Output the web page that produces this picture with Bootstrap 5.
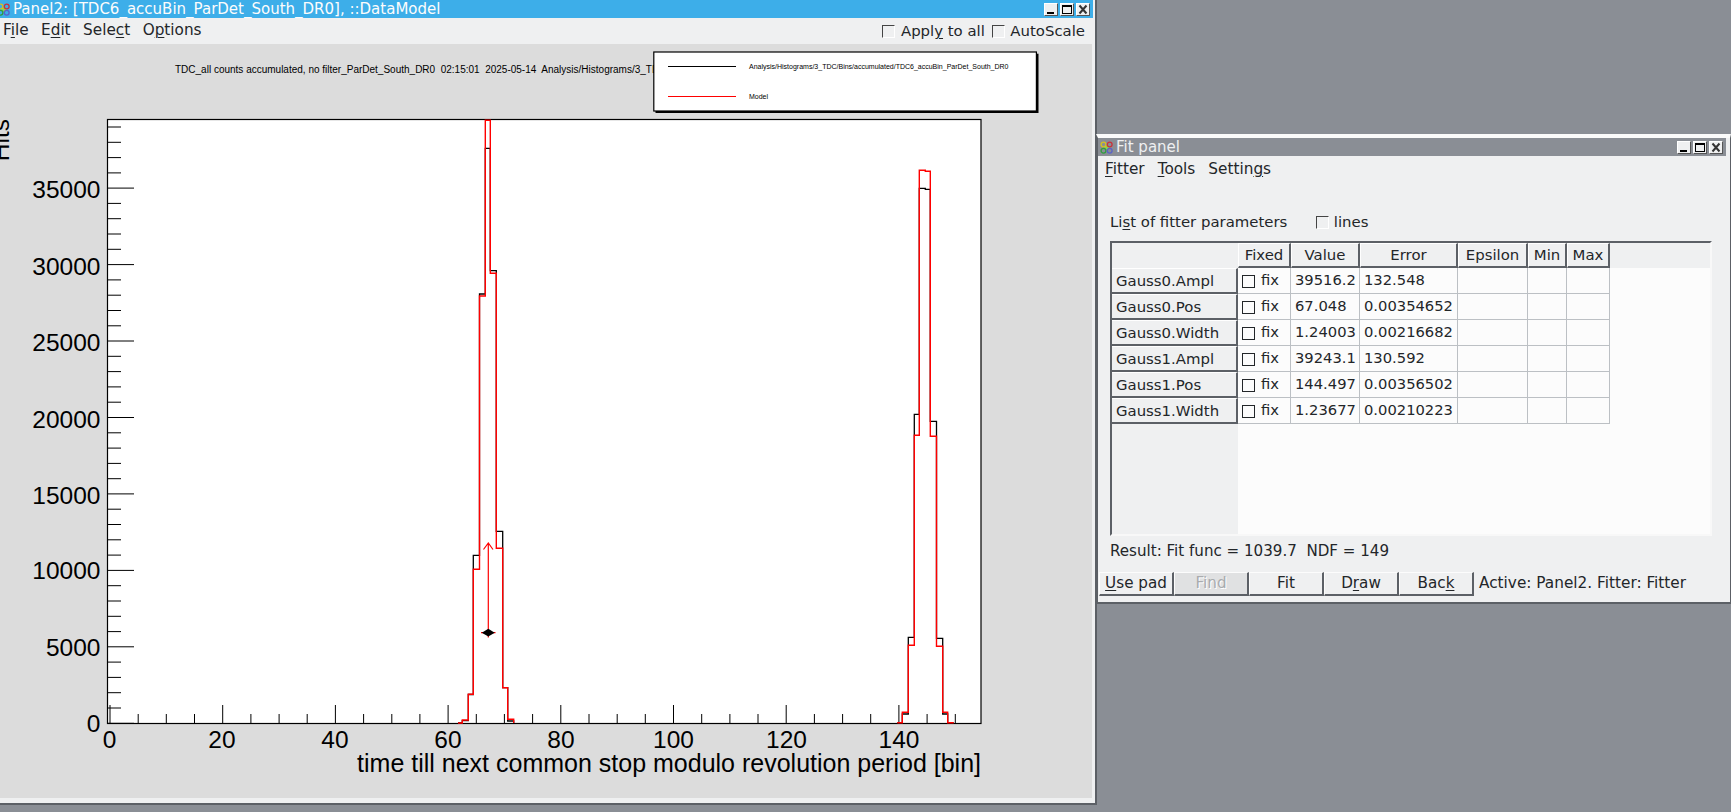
<!DOCTYPE html>
<html lang="en">
<head>
<meta charset="utf-8">
<title>Panel2</title>
<link href="https://cdn.jsdelivr.net/npm/bootstrap@5.3.0/dist/css/bootstrap.min.css" rel="stylesheet">
<style>
html,body{height:100%;}
body{margin:0;overflow:hidden;background:#8a8e95;font-family:"DejaVu Sans",sans-serif;font-size:14.9px;color:#232629;line-height:1;position:relative;}
u{text-decoration-thickness:1px;text-underline-offset:2px;}
.desk-win{position:absolute;background:#eff0f1;}
.win-main{left:0;top:0;width:1097px;height:805px;border-right:2px solid #5c6066;border-bottom:2px solid #5c6066;}
.win-fit{left:1096px;top:134px;width:635px;height:470px;border-left:2px solid #5c6066;border-top:4px solid #fafafa;border-bottom:2px solid #5c6066;border-right:1px solid #5c6066;}
.title-bar{height:18px;color:#eff0f1;font-size:15px;white-space:nowrap;}
.title-main{background:#3daee9;margin-right:2px;padding-left:0;color:#fcfcfc;}
.title-fit{background:#8a8e95;margin-right:4px;padding-left:2px;}
.title-logo{flex:none;width:13px;height:13px;}
.logo-cut{margin-left:-3px;}
.title-text{margin-left:3px;}
.win-btns{margin-left:auto;gap:2px;padding-right:3px;}
.win-btn{width:14px;height:13px;background:#eff0f1;border-top:1px solid #fff;border-left:1px solid #fff;border-right:1px solid #555;border-bottom:1px solid #555;display:block;}
.win-btn svg{display:block;width:12px;height:11px;}
.menu-main{height:26px;padding-left:3px;}
.menu-gap{gap:12.5px;font-size:15.25px;}
.opt-check{gap:5.5px;}
.opts{margin-left:auto;padding-right:10px;gap:7px;}
.sunken{appearance:none;display:block;flex:none;width:13px;height:13px;margin:0;background:#eff0f1;border:0;border-top:1px solid #444;border-left:1px solid #444;border-right:1px solid #fff;border-bottom:1px solid #fff;border-radius:0;}
.canvas-box{display:block;width:1092px;height:754px;background:#dcdcdc;}
.canvas-box text{font-family:"Liberation Sans",Arial,sans-serif;white-space:pre;fill:#000;}
.menu-fit{height:24px;padding-left:7px;gap:13px;font-size:15.3px;padding-top:3px;}
.list-row{margin-top:33px;height:19px;padding-left:12px;}
.list-lines{margin-left:29px;gap:4.5px;}
.tbl-frame{margin:9px 18px 0 12px;height:295px;width:602px;border-top:2px solid #5c6066;border-left:2px solid #5c6066;border-right:2px solid #f8f8f8;border-bottom:2px solid #f8f8f8;background:linear-gradient(#eff0f1,#eff0f1) 0 0/126px 100% no-repeat,linear-gradient(#eff0f1,#eff0f1) 0 0/100% 25px no-repeat,#fcfcfc;}
.fit-tbl{width:auto;table-layout:fixed;border-collapse:separate;border-spacing:0;margin:0;--bs-table-bg:transparent;}
.table.fit-tbl>:not(caption)>*>*{padding:0;border:0;box-shadow:none;color:#232629;vertical-align:middle;white-space:nowrap;overflow:hidden;}
.table.fit-tbl>thead>tr>th{height:25px;font-weight:400;text-align:center;padding-top:1px;border-right:2px solid #5c6066;border-bottom:2px solid #5c6066;border-top:1px solid #fff;border-left:1px solid #fff;background:#eff0f1;}
.table.fit-tbl>thead>tr>th.corner{border:0;}
.table.fit-tbl>tbody>tr>th{height:26px;font-weight:400;padding-left:4px;padding-top:1px;background:#eff0f1;border-right:2px solid #5c6066;border-bottom:2px solid #5c6066;border-top:1px solid #fff;}
.table.fit-tbl>tbody>tr>td{height:26px;background:#fcfcfc;padding:0 0 1px 4px;font-size:14.72px;border-right:1px solid #bcc0c4;border-bottom:1px solid #bcc0c4;}
.fix-wrap{gap:6px;}
.fix-box{appearance:none;display:block;flex:none;width:13px;height:13px;margin:3px 0 0 0;background:#fcfcfc;border:1px solid #232629;border-radius:0;}
.result-row{height:16px;margin-top:8px;padding-left:12px;font-size:15.1px;}
.btn-row{margin-top:12px;padding-left:1px;height:24px;}
.btn.qt-btn{width:75px;height:24px;padding:0;border-radius:0;font-size:15.2px;line-height:1;color:#232629;background:#eff0f1;border:0;border-top:1px solid #fcfcfc;border-left:1px solid #fcfcfc;border-right:2px solid #5c6066;border-bottom:2px solid #5c6066;}
.btn.qt-btn.find-off{background:#e0e1e2;color:#a9abae;text-shadow:1px 1px 0 #fff;opacity:1;}
.active-info{margin-left:5px;font-size:15.3px;}
</style>
</head>
<body>

<div class="desk-win win-main d-flex flex-column">
  <div class="title-bar title-main d-flex align-items-center">
    <svg class="title-logo logo-cut" viewBox="0 0 13 13" aria-hidden="true"><circle cx="7" cy="6.5" r="2.2" fill="#8fd14f"/><circle cx="3.5" cy="3.5" r="2.4" fill="none" stroke="#d6c21f" stroke-width="1.3"/><circle cx="9.7" cy="3.5" r="2.4" fill="none" stroke="#c8323c" stroke-width="1.3"/><circle cx="3.5" cy="9.7" r="2.4" fill="none" stroke="#2f9e3f" stroke-width="1.3"/><circle cx="9.7" cy="9.7" r="2.4" fill="none" stroke="#5a62c8" stroke-width="1.3"/></svg>
    <span class="title-text">Panel2: [TDC6_accuBin_ParDet_South_DR0], ::DataModel</span>
    <div class="win-btns d-flex">
      <span class="win-btn"><svg viewBox="0 0 12 11" aria-hidden="true"><rect x="2" y="8" width="7" height="2" fill="#000"/></svg></span>
      <span class="win-btn"><svg viewBox="0 0 12 11" aria-hidden="true"><rect x="1.5" y="1.5" width="9" height="8" fill="none" stroke="#000"/><rect x="1" y="1" width="10" height="2" fill="#000"/></svg></span>
      <span class="win-btn"><svg viewBox="0 0 12 11" aria-hidden="true"><path d="M2.5 1.5 9.5 9.5M9.5 1.5 2.5 9.5" stroke="#333" stroke-width="2" fill="none"/></svg></span>
    </div>
  </div>
  <div class="menu-main d-flex align-items-center">
    <nav class="d-flex menu-gap">
      <span>F<u>i</u>le</span><span>E<u>d</u>it</span><span>Sele<u>c</u>t</span><span>O<u>p</u>tions</span>
    </nav>
    <div class="opts d-flex align-items-center">
      <label class="d-flex align-items-center opt-check"><input class="sunken" type="checkbox"><span>Appl<u>y</u> to all</span></label>
      <label class="d-flex align-items-center opt-check"><input class="sunken" type="checkbox"><span>AutoScale</span></label>
    </div>
  </div>
  <svg class="canvas-box" id="plot" viewBox="0 44 1092 754" aria-label="Histogram">
    <text x="175" y="72.5" font-size="10">TDC_all counts accumulated, no filter_ParDet_South_DR0  02:15:01  2025-05-14  Analysis/Histograms/3_TDC/Bins/accumulated</text>
    <rect x="107.5" y="119.5" width="873.5" height="604" fill="#fff" stroke="#000" stroke-width="1.2"/>
    <path id="ticks" fill="none" stroke="#000" stroke-width="1"/>
    <path fill="none" stroke="#000" stroke-width="1.3" d="M458 723 H462.3 V720.7 H468.3 V694.5 H473.3 V555.3 H479.5 V294 H485.3 V148.3 H490.3 V270.7 H496.3 V531.3 H502.7 V687.7 H507.7 V721 H513.7 V723 M897.3 723 H902.3 V714 H908.3 V637.3 H914.3 V414.3 H919.3 V188.3 H925.3 V189.3 H930.3 V421.3 H936.5 V638.3 H942.7 V714 H947.7 V723 H953.7"/>
    <path fill="none" stroke="#f00" stroke-width="1.4" d="M458 723 H462.3 V720 H468.3 V694.3 H473.3 V569.3 H479.5 V296 H485.3 V120.2 H490.3 V273.3 H496.3 V548.3 H502.7 V687.7 H507.7 V719.3 H513.7 V723 M897.3 722.7 H902.3 V712.3 H908.3 V645.3 H914.3 V435.3 H919.3 V170.3 H925.3 V171.3 H930.3 V436.3 H936.5 V646.3 H942.7 V712.3 H947.7 V722.7 H953.7"/>
    <path fill="none" stroke="#f00" stroke-width="1.2" d="M488.3 637.5V543M481 632.7H495.5M483.5 549.5 488.3 543 493 549.5"/>
    <path fill="#000" d="M481.8 632.7 488.3 628.8 494.7 632.7 488.3 636.4Z"/>
    <rect x="655.5" y="53.7" width="383" height="59.3" fill="#000"/>
    <rect x="653.8" y="52" width="382.6" height="59" fill="#fff" stroke="#000" stroke-width="1.2"/>
    <path d="M668 66.5H736" stroke="#000" stroke-width="1.1"/>
    <path d="M668 96.5H736" stroke="#f00" stroke-width="1.1"/>
    <text x="749" y="69" font-size="7">Analysis/Histograms/3_TDC/Bins/accumulated/TDC6_accuBin_ParDet_South_DR0</text>
    <text x="749" y="99" font-size="7">Model</text>
    <g font-size="24.5" text-anchor="end">
      <text x="100.5" y="198">35000</text><text x="100.5" y="274.5">30000</text><text x="100.5" y="351">25000</text><text x="100.5" y="427.5">20000</text><text x="100.5" y="503.5">15000</text><text x="100.5" y="579">10000</text><text x="100.5" y="656">5000</text><text x="100.5" y="731.5">0</text>
    </g>
    <g font-size="24.5" text-anchor="middle">
      <text x="109.5" y="748">0</text><text x="222" y="748">20</text><text x="335" y="748">40</text><text x="448" y="748">60</text><text x="561" y="748">80</text><text x="673.5" y="748">100</text><text x="786.5" y="748">120</text><text x="899" y="748">140</text>
    </g>
    <text x="981" y="771.5" font-size="25" text-anchor="end">time till next common stop modulo revolution period [bin]</text>
    <text transform="translate(8.5 119) rotate(-90)" font-size="24.5" text-anchor="end">Hits</text>
  </svg>
</div>

<div class="desk-win win-fit d-flex flex-column">
  <div class="title-bar title-fit d-flex align-items-center">
    <svg class="title-logo" viewBox="0 0 13 13" aria-hidden="true"><circle cx="7" cy="6.5" r="2.2" fill="#8fd14f"/><circle cx="3.5" cy="3.5" r="2.4" fill="none" stroke="#d6c21f" stroke-width="1.3"/><circle cx="9.7" cy="3.5" r="2.4" fill="none" stroke="#c8323c" stroke-width="1.3"/><circle cx="3.5" cy="9.7" r="2.4" fill="none" stroke="#2f9e3f" stroke-width="1.3"/><circle cx="9.7" cy="9.7" r="2.4" fill="none" stroke="#5a62c8" stroke-width="1.3"/></svg>
    <span class="title-text">Fit panel</span>
    <div class="win-btns d-flex">
      <span class="win-btn"><svg viewBox="0 0 12 11" aria-hidden="true"><rect x="2" y="8" width="7" height="2" fill="#000"/></svg></span>
      <span class="win-btn"><svg viewBox="0 0 12 11" aria-hidden="true"><rect x="1.5" y="1.5" width="9" height="8" fill="none" stroke="#000"/><rect x="1" y="1" width="10" height="2" fill="#000"/></svg></span>
      <span class="win-btn"><svg viewBox="0 0 12 11" aria-hidden="true"><path d="M2.5 1.5 9.5 9.5M9.5 1.5 2.5 9.5" stroke="#333" stroke-width="2" fill="none"/></svg></span>
    </div>
  </div>
  <nav class="menu-fit d-flex align-items-center">
    <span><u>F</u>itter</span><span><u>T</u>ools</span><span>Settin<u>g</u>s</span>
  </nav>
  <div class="list-row d-flex align-items-center">
    <span>Li<u>s</u>t of fitter parameters</span>
    <label class="list-lines d-flex align-items-center"><input class="sunken" type="checkbox"><span>lines</span></label>
  </div>
  <div class="tbl-frame">
    <table class="table fit-tbl">
      <colgroup><col style="width:126px"><col style="width:53px"><col style="width:69px"><col style="width:98px"><col style="width:70px"><col style="width:39px"><col style="width:43px"></colgroup>
      <thead><tr><th class="corner"></th><th>Fixed</th><th>Value</th><th>Error</th><th>Epsilon</th><th>Min</th><th>Max</th></tr></thead>
      <tbody>
        <tr><th>Gauss0.Ampl</th><td><span class="d-flex align-items-center fix-wrap"><input class="fix-box" type="checkbox"><span>fix</span></span></td><td>39516.2</td><td>132.548</td><td></td><td></td><td></td></tr>
        <tr><th>Gauss0.Pos</th><td><span class="d-flex align-items-center fix-wrap"><input class="fix-box" type="checkbox"><span>fix</span></span></td><td>67.048</td><td>0.00354652</td><td></td><td></td><td></td></tr>
        <tr><th>Gauss0.Width</th><td><span class="d-flex align-items-center fix-wrap"><input class="fix-box" type="checkbox"><span>fix</span></span></td><td>1.24003</td><td>0.00216682</td><td></td><td></td><td></td></tr>
        <tr><th>Gauss1.Ampl</th><td><span class="d-flex align-items-center fix-wrap"><input class="fix-box" type="checkbox"><span>fix</span></span></td><td>39243.1</td><td>130.592</td><td></td><td></td><td></td></tr>
        <tr><th>Gauss1.Pos</th><td><span class="d-flex align-items-center fix-wrap"><input class="fix-box" type="checkbox"><span>fix</span></span></td><td>144.497</td><td>0.00356502</td><td></td><td></td><td></td></tr>
        <tr><th>Gauss1.Width</th><td><span class="d-flex align-items-center fix-wrap"><input class="fix-box" type="checkbox"><span>fix</span></span></td><td>1.23677</td><td>0.00210223</td><td></td><td></td><td></td></tr>
      </tbody>
    </table>
  </div>
  <div class="result-row d-flex align-items-center"><span>Result: Fit func = 1039.7&nbsp; NDF = 149</span></div>
  <div class="btn-row d-flex align-items-center">
    <button type="button" class="btn qt-btn"><u>U</u>se pad</button>
    <button type="button" class="btn qt-btn find-off">Find</button>
    <button type="button" class="btn qt-btn">Fit</button>
    <button type="button" class="btn qt-btn">D<u>r</u>aw</button>
    <button type="button" class="btn qt-btn">Bac<u>k</u></button>
    <span class="active-info">Active: Panel2. Fitter: Fitter</span>
  </div>
</div>

<script src="https://cdn.jsdelivr.net/npm/bootstrap@5.3.0/dist/js/bootstrap.bundle.min.js"></script>
<script>
(function(){
  var d='',k;
  for(k=0;k<40;k++){var y=723.3-15.29*k;if(y<120)break;d+='M107.5 '+y.toFixed(1)+'H'+(k%5==0?134:121);}
  for(k=0;k<31;k++){var x=110+28.175*k;d+='M'+x.toFixed(1)+' 723.3V'+(k%4==0?705:714);}
  document.getElementById('ticks').setAttribute('d',d);
})();
</script>
</body>
</html>
